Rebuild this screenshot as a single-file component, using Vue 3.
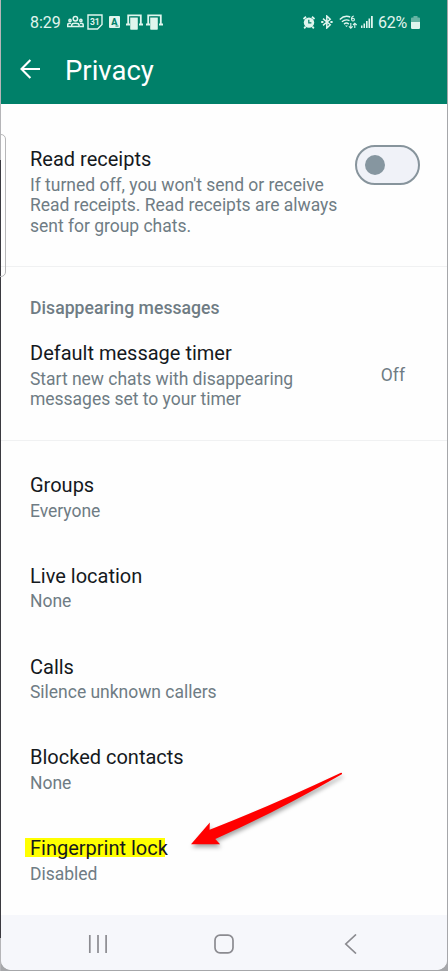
<script setup>
const items = [
  { title: 'Groups', value: 'Everyone' },
  { title: 'Live location', value: 'None' },
  { title: 'Calls', value: 'Silence unknown callers' },
  { title: 'Blocked contacts', value: 'None' },
  { title: 'Fingerprint lock', value: 'Disabled', marked: true },
]
const receiptLines = [
  "If turned off, you won't send or receive",
  'Read receipts. Read receipts are always',
  'sent for group chats.',
]
const timerLines = ['Start new chats with disappearing', 'messages set to your timer']
</script>

<template>
  <div class="backdrop">
    <div class="phone">
      <header class="header">
        <div class="status">
          <span class="clock">8:29</span>
          <svg class="people" width="17" height="14" viewBox="0 0 17 14" fill="none" stroke="currentColor" stroke-width="1.5">
            <circle cx="8.4" cy="3.7" r="2.2" />
            <path d="M4.7 11.4V10c0-2.3 7.4-2.3 7.4 0v1.4z" />
            <circle cx="3" cy="5.4" r="1.1" />
            <circle cx="13.9" cy="5.4" r="1.1" />
            <path d="M4 8.4c-2-.4-3.3.3-3.3 1.4v1.6H4M12.9 8.4c2-.4 3.3.3 3.3 1.4v1.6h-3.3" />
          </svg>
          <svg class="calendar" width="16" height="16" viewBox="0 0 16 16">
            <path d="M1 1h14v9.5L10.5 15H1z" fill="none" stroke="currentColor" stroke-width="1.4" />
            <text x="7.8" y="11" text-anchor="middle" font-size="8.5" font-weight="700" fill="currentColor">31</text>
          </svg>
          <svg class="letter" width="11" height="12" viewBox="0 0 11 12">
            <rect width="11" height="12" rx="1" fill="currentColor" />
            <text x="5.3" y="8.8" text-anchor="middle" font-size="9" font-weight="900" fill="#008069">A</text>
            <path d="M6.5 10h3" stroke="#008069" />
          </svg>
          <svg v-for="n in 2" :key="n" class="device" width="17" height="16" viewBox="0 0 17 16">
            <path d="M2.2 10V1.4h12.6V10M0 10.5h4M13 10.5h4" fill="none" stroke="currentColor" stroke-width="1.8" />
            <rect x="4.2" y="3.2" width="7.6" height="12.6" rx=".7" fill="currentColor" />
            <path d="M4.6 3h7" stroke="#008069" stroke-width=".8" />
          </svg>

          <svg class="alarm" width="12" height="13" viewBox="0 0 12 13">
            <path d="M.5 3 3 .8M11.5 3 9 .8M2.6 10.7 1.2 12.3M9.4 10.7l1.4 1.6" stroke="currentColor" stroke-width="1.8" />
            <circle cx="6" cy="6.6" r="5.2" fill="currentColor" />
            <path d="M5.8 3.7v3.2h2.6" fill="none" stroke="#008069" stroke-width="1.2" />
          </svg>
          <svg class="bluetooth" width="12" height="14" viewBox="0 0 12 14" fill="none" stroke="currentColor" stroke-width="1.5">
            <path d="m2 3.6 7.2 6.2L5.8 13V1l3.4 3.2L2 10.4" />
            <path d="M.2 7h2.2M9.4 7h2.2" stroke-width="1.9" />
          </svg>
          <svg class="wifi" width="19" height="15" viewBox="0 0 19 15" fill="none" stroke="currentColor">
            <path d="M.8 4.4C4 1.3 8 .8 11.2 2M2.9 6.8c2.4-2.1 5.2-2.4 7.6-1.2M5 9.1c1.5-1.3 3.3-1.3 4.8 0" stroke-width="1.4" />
            <path d="m6 10.6 1.5 1.5L9 10.6z" fill="currentColor" stroke="none" />
            <path d="M14.8 1c-1.6.2-2.3 1.5-2.2 3.2" stroke-width="1.2" />
            <circle cx="14" cy="4.6" r="1.4" stroke-width="1.1" />
            <path d="M11.8 8v5M9.9 11.3l1.9 1.9 1.9-1.9M15.8 13V8.2M14 10l1.8-1.8L17.7 10" stroke-width="1.1" />
          </svg>
          <svg class="signal" width="12" height="12" viewBox="0 0 12 12" fill="currentColor">
            <path d="M0 9.5h1.5V12H0zM2.5 7.5H4V12H2.5zM5 5h1.6v7H5zM7.5 2.6h1.6V12H7.5zM10 0h1.8v12H10z" />
          </svg>
          <span class="percent">62%</span>
          <svg class="battery" width="9" height="13" viewBox="0 0 9 13" fill="currentColor">
            <path d="M0 2.4q0-1 1-1h1.5V0h4v1.4H8q1 0 1 1V6H0z" opacity=".45" />
            <path d="M0 6h9v5.8q0 1.2-1.2 1.2H1.2Q0 13 0 11.8z" />
          </svg>
        </div>
        <div class="toolbar">
          <svg width="20" height="20" viewBox="0 0 20 20" fill="none" stroke="currentColor" stroke-width="2.1">
            <path d="M20 10H1.6M10.4 .9 1.5 10l8.9 9.1" />
          </svg>
          <h1>Privacy</h1>
        </div>
      </header>

      <main class="content">
        <section class="receipts">
          <div>
            <div class="title">Read receipts</div>
            <div class="desc"><div v-for="line in receiptLines" :key="line">{{ line }}</div></div>
          </div>
          <div class="switch"><span class="knob"></span></div>
        </section>

        <section class="timer">
          <h2>Disappearing messages</h2>
          <div class="timer-row">
            <div>
              <div class="title">Default message timer</div>
              <div class="desc"><div v-for="line in timerLines" :key="line">{{ line }}</div></div>
            </div>
            <span class="state">Off</span>
          </div>
        </section>

        <section class="list">
          <div v-for="item in items" :key="item.title" class="item">
            <div class="title" :class="{ marked: item.marked }"><span>{{ item.title }}</span></div>
            <div class="desc">{{ item.value }}</div>
          </div>
        </section>
      </main>

      <nav class="nav">
        <svg width="20" height="20" viewBox="0 0 20 20"><path d="M2.8 1v18M11 1v18M19.1 1v18" /></svg>
        <svg width="20" height="20" viewBox="0 0 20 20"><rect x="1" y="1.2" width="18" height="17.6" rx="5" /></svg>
        <svg width="20" height="20" viewBox="0 0 20 20"><path d="M16 .5 5.8 10 16 19.5" /></svg>
      </nav>
    </div>

    <div class="edge-handle"></div>
    <svg class="arrow" width="170" height="90" viewBox="0 0 170 90">
      <path d="M7 79.3 25.8 57.5l-.2 7.2Q80 43.8 157 7.7q1.6-.2.8 1.5Q92 47 31.3 74l4.8 5.2z" fill="#f00" />
    </svg>
  </div>
</template>

<style>
body {
  overflow: hidden;
}
</style>

<style scoped>
.backdrop {
  position: relative;
  box-sizing: border-box;
  width: 448px;
  height: 971px;
  padding: 0 1px 1px;
  background: linear-gradient(#b5b5b8 0 160px, #3b3a40 160px 938px, #b5b5b8 938px) 0 0 / 1px 100% no-repeat #a6a7aa;
  font-family: Roboto, sans-serif;
}
.phone {
  display: flex;
  flex-direction: column;
  height: 970px;
  overflow: hidden;
  border-radius: 0 0 10px 10px;
  background: #fefefe;
}
.header {
  box-sizing: border-box;
  height: 103.5px;
  flex: none;
  padding-top: 12px;
  background: #008069;
  color: #fff;
}
.status {
  display: flex;
  align-items: center;
  height: 20px;
  padding-left: 29px;
  color: #e0f5ee;
}
.status svg {
  flex: none;
}
.clock,
.percent {
  padding-top: 1px;
  font-size: 16px;
  line-height: 20px;
}
.clock {
  width: 37px;
}
.calendar {
  margin-left: 3px;
}
.letter {
  margin-left: 6px;
}
.device {
  margin-left: 6px;
}
.device + .device {
  margin-left: 3px;
}
.alarm {
  margin-left: auto;
}
.bluetooth {
  margin-left: 6px;
}
.wifi {
  margin-left: 6px;
}
.signal {
  margin-left: 3px;
}
.percent {
  width: 31px;
  margin-left: 5px;
  letter-spacing: -0.2px;
}
.battery {
  margin: 0 27px 0 2px;
}
.toolbar {
  display: flex;
  align-items: center;
  gap: 25px;
  height: 36px;
  margin-top: 19px;
  padding: 0 19px;
}
h1 {
  margin: 3px 0 0;
  font-size: 27.5px;
  font-weight: 400;
  line-height: 36px;
}
.content {
  height: 811px;
  flex: none;
}
.title {
  font-size: 20px;
  line-height: 24px;
  color: #15191d;
}
.desc {
  margin-top: 3.7px;
  font-size: 17.5px;
  line-height: 20.5px;
  letter-spacing: -0.02px;
  color: #6f7c84;
  white-space: nowrap;
}
.receipts,
.timer {
  box-sizing: border-box;
  border-bottom: 1px solid #f0f1f2;
}
.receipts {
  display: flex;
  justify-content: space-between;
  align-items: flex-start;
  height: 163.5px;
  padding: 43.5px 27px 0 29px;
}
.switch {
  display: flex;
  align-items: center;
  box-sizing: border-box;
  width: 65px;
  height: 40px;
  margin-top: -2px;
  padding-left: 8px;
  border: 2.5px solid #87949c;
  border-radius: 20px;
  background: #f0f2f8;
}
.knob {
  width: 20px;
  height: 20px;
  border-radius: 50%;
  background: #8696a0;
}
.timer {
  height: 174px;
  padding: 31px 42px 0 29px;
}
h2 {
  margin: 0 0 23px;
  font-size: 17.6px;
  font-weight: 500;
  line-height: 20px;
  letter-spacing: 0.04px;
  color: #6f7c84;
}
.timer-row {
  display: flex;
  justify-content: space-between;
  align-items: center;
}
.state {
  font-size: 17.5px;
  line-height: 20px;
  color: #6f7c84;
}
.list {
  padding: 32px 29px 0;
}
.item {
  height: 90.8px;
}
.marked {
  width: 140px;
  margin-left: -5px;
  padding-left: 5px;
  box-sizing: border-box;
  background: linear-gradient(#ff0, #ff0) 0 2px / 100% 19px no-repeat;
  white-space: nowrap;
}
.nav {
  display: flex;
  justify-content: space-between;
  align-items: center;
  flex: 1;
  padding: 3px 87px 0 86px;
  background: #f6f7fb;
}
.nav svg {
  fill: none;
  stroke: #8b8b90;
  stroke-width: 1.7;
}
.edge-handle {
  position: absolute;
  left: -4px;
  top: 134px;
  box-sizing: border-box;
  width: 10px;
  height: 143px;
  border: 1px solid #b6b6b8;
  border-radius: 5px;
}
.arrow {
  position: absolute;
  left: 184px;
  top: 765px;
  filter: drop-shadow(1px 3px 2px rgba(0, 0, 0, 0.35));
}
</style>
